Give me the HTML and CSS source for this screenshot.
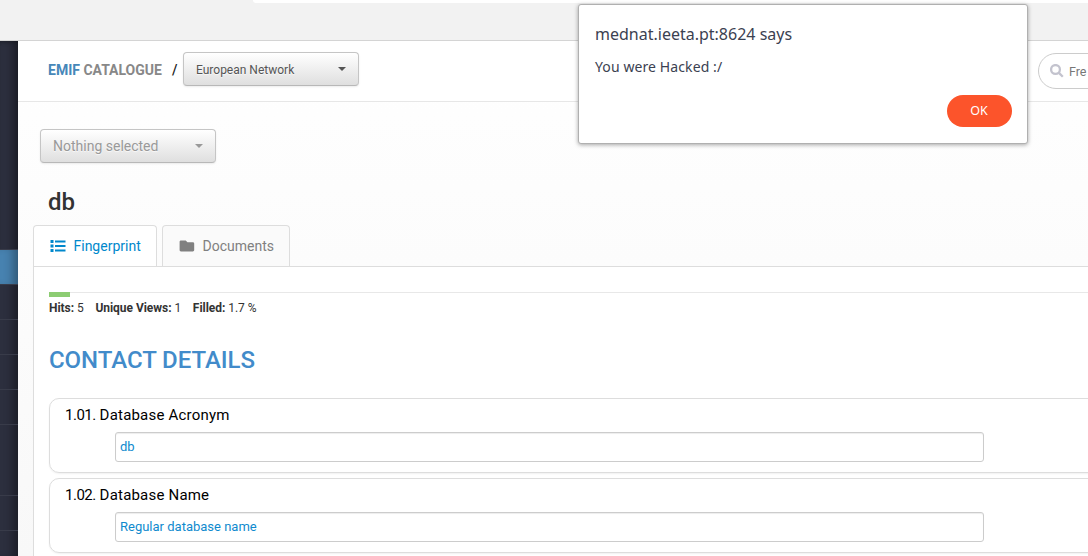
FILE: index.html
```
<!DOCTYPE html>
<html lang="en">
<head>
<meta charset="utf-8">
<title>EMIF Catalogue</title>
<link rel="stylesheet" href="styles.css">
</head>
<body>
<div class="chrome"><div class="omnibox"></div></div>
<div class="app">
  <nav class="sidebar">
    <div class="side-top"></div>
    <div class="side-item active"></div>
    <div class="side-item"></div>
    <div class="side-item"></div>
    <div class="side-item"></div>
    <div class="side-item"></div>
    <div class="side-item tall"></div>
    <div class="side-item"></div>
  </nav>
  <main class="main">
    <header class="header">
      <div class="brand"><span class="brand-name">EMIF</span> CATALOGUE</div>
      <span class="slash">/</span>
      <button class="select network"><span>European Network</span><i class="caret"></i></button>
      <div class="search">
        <svg class="search-icon" viewBox="0 0 14 14"><circle cx="5.5" cy="5.5" r="4.4"/><path d="M8.9 8.9 12.8 12.8"/></svg>
        <span>Fre</span>
      </div>
    </header>
    <button class="select empty"><span>Nothing selected</span><i class="caret"></i></button>
    <h1 class="title">db</h1>
    <div class="tabs">
      <div class="tab current">
        <svg class="tab-icon" viewBox="0 0 16 14"><path d="M.5 1h3v3h-3zM.5 5.500h3v3h-3zM.5 10h3v3h-3zM5 1.500h10.500v2H5zM5 6h10.500v2H5zM5 10.500h10.500v2H5z"/></svg>
        <span>Fingerprint</span>
      </div>
      <div class="tab">
        <svg class="tab-icon" viewBox="0 0 16 14"><path d="M2 1.5h4.700l1.800 1.800h5.300c.9 0 1.400.6 1.400 1.400v6.400c0 .9-.6 1.400-1.400 1.400H2c-.9 0-1.400-.6-1.400-1.400V2.900C.6 2.100 1.100 1.500 2 1.500z"/></svg>
        <span>Documents</span>
      </div>
    </div>
    <section class="panel">
      <div class="progress"><div class="progress-bar"></div></div>
      <div class="stats"><span><b>Hits:</b> 5</span><span><b>Unique Views:</b> 1</span><span><b>Filled:</b> 1.7 %</span></div>
      <h2 class="section-title">CONTACT DETAILS</h2>
      <div class="question"><div class="label"><span class="number">1.01.</span> Database Acronym</div><div class="field">db</div></div>
      <div class="question"><div class="label"><span class="number">1.02.</span> Database Name</div><div class="field">Regular database name</div></div>
    </section>
  </main>
</div>
<div class="dialog">
  <div class="dialog-title">mednat.ieeta.pt:8624 says</div>
  <div class="dialog-text">You were Hacked :/</div>
  <button class="ok">OK</button>
</div>
</body>
</html>
```
FILE: styles.css
```
* { box-sizing: border-box; }
body {
  margin: 0;
  width: 1088px;
  height: 556px;
  overflow: hidden;
  position: relative;
  font-family: Roboto, sans-serif;
  font-size: 14px;
  color: #333;
  background: #fff;
}
.chrome { height: 41px; background: #f2f2f2; border-bottom: 1px solid #d4d4d4; }
.omnibox { height: 3px; margin-left: 253px; background: #fff; border-bottom-left-radius: 4px; }
.app { display: flex; height: 515px; overflow: hidden; }
.sidebar {
  flex: none;
  width: 18px;
  background: #2c2f3e;
  box-shadow: inset -10px 0 10px -5px rgba(0, 0, 0, .38);
}
.side-top { height: 209px; border-bottom: 1px solid #383b49; box-shadow: inset 0 3px 4px -2px rgba(0, 0, 0, .3); }
.side-item { height: 35px; border-bottom: 1px solid #383b49; }
.side-item.active {
  background: #4782b0;
  box-shadow: inset -10px 0 10px -5px rgba(0, 0, 0, .32);
}
.side-item.tall { height: 71px; }
.main {
  flex: 1;
  min-width: 0;
  height: 515px;
  background: linear-gradient(#fff, #f8f8f8);
}
.header {
  display: flex;
  align-items: flex-start;
  height: 61px;
  padding: 11px 0 0 30px;
  background: #fff;
  border-bottom: 1px solid #e7e7e7;
}
.brand { flex: none; width: 124px; line-height: 36px; font-weight: 700; color: #888; white-space: nowrap; }
.brand-name { color: #4687b9; }
.slash { flex: none; width: 11px; line-height: 36px; font-weight: 500; color: #222; }
.select {
  display: flex;
  flex: none;
  align-items: center;
  justify-content: space-between;
  width: 176px;
  height: 34px;
  padding: 0 12px;
  border: 1px solid #c5c5c5;
  border-bottom-color: #b8b8b8;
  border-radius: 4px;
  background: linear-gradient(#fff, #dfdfdf);
  box-shadow: 0 1px 2px rgba(0, 0, 0, .08);
  font-family: inherit;
  text-shadow: 0 1px 1px rgba(255, 255, 255, .75);
  white-space: nowrap;
}
.network { font-size: 12px; color: #555; }
.network span { padding-top: 2px; }
.empty { margin: 27px 0 0 22px; font-size: 14px; color: #999; }
.caret { border: 4px solid transparent; border-top-color: currentColor; border-bottom: 0; }
.search {
  display: flex;
  align-items: center;
  flex: none;
  width: 220px;
  height: 36px;
  margin: 1px 0 0 679px;
  padding-left: 11px;
  border: 1px solid #ccc;
  border-radius: 18px;
  font-size: 12.5px;
  color: #777;
  background: #fff;
  white-space: nowrap;
}
.search-icon { flex: none; width: 14px; height: 14px; margin-right: 5px; fill: none; stroke: #c3c3ce; stroke-width: 2.3; }
.title { margin: 22px 0 0 30px; font-size: 24px; font-weight: 500; line-height: 34px; color: #333; }
.tabs { display: flex; gap: 5px; height: 41px; margin: 6px 0 0 15px; }
.tab {
  display: flex;
  align-items: center;
  gap: 7.5px;
  width: 128px;
  padding: 0 0 1px 16px;
  border: 1px solid #ddd;
  border-bottom: 0;
  border-radius: 4px 4px 0 0;
  background: #fafafa;
  color: #808080;
}
.tab.current { position: relative; width: 124px; height: 41px; background: #fff; color: #0088cc; }
.tab-icon { width: 16px; height: 14px; fill: currentColor; }
.panel {
  height: 300px;
  margin-left: 15px;
  padding: 25px 0 0 15px;
  border: 1px solid #ddd;
  border-right: 0;
  background: #fff;
}
.progress { height: 5px; border-top: 1px solid #e8e8e8; }
.progress-bar { width: 21px; height: 5px; margin-top: -1px; background: #8ccc72; }
.stats { display: flex; gap: 11.7px; margin-top: 3px; font-size: 12px; line-height: 16px; letter-spacing: -.04px; }
.section-title { margin: 26px 0 20px; font-size: 24px; font-weight: 500; line-height: 36px; letter-spacing: -.05px; color: #428bca; }
.question {
  height: 75px;
  margin: 0 -20px 5px 0;
  padding: 8px 0 0 15px;
  border: 1px solid #ddd;
  border-radius: 10px;
  box-shadow: 0 1px 2px rgba(0, 0, 0, .06);
}
.label { font-size: 15px; line-height: 17px; letter-spacing: .2px; color: #000; }
.number { letter-spacing: -.5px; }
.field {
  width: 869px;
  height: 30px;
  margin: 8px 0 0 50px;
  padding-left: 4px;
  border: 1px solid #ccc;
  border-radius: 3px;
  box-shadow: inset 0 1px 1px rgba(0, 0, 0, .075);
  font-size: 13px;
  line-height: 28px;
  color: #0f8ace;
}
.dialog {
  position: absolute;
  left: 578px;
  top: 4px;
  display: flex;
  flex-direction: column;
  width: 450px;
  height: 140px;
  padding: 18px 15.5px 16px 16px;
  border: 1px solid #b0b0b0;
  border-radius: 3px;
  background: #fff;
  box-shadow: 0 1px 4px rgba(0, 0, 0, .35);
  font-family: "Noto Sans", sans-serif;
  color: #3b4151;
}
.dialog-title { font-size: 16px; line-height: 22px; }
.dialog-text { margin-top: 12px; font-size: 14px; line-height: 20px; letter-spacing: .1px; }
.ok {
  align-self: flex-end;
  width: 65px;
  height: 33px;
  margin-top: 17.5px;
  padding: 0;
  border: 0;
  border-radius: 17px;
  background: #fc542b;
  color: #fff;
  font: 12.500px "Noto Sans", sans-serif;
}
```
